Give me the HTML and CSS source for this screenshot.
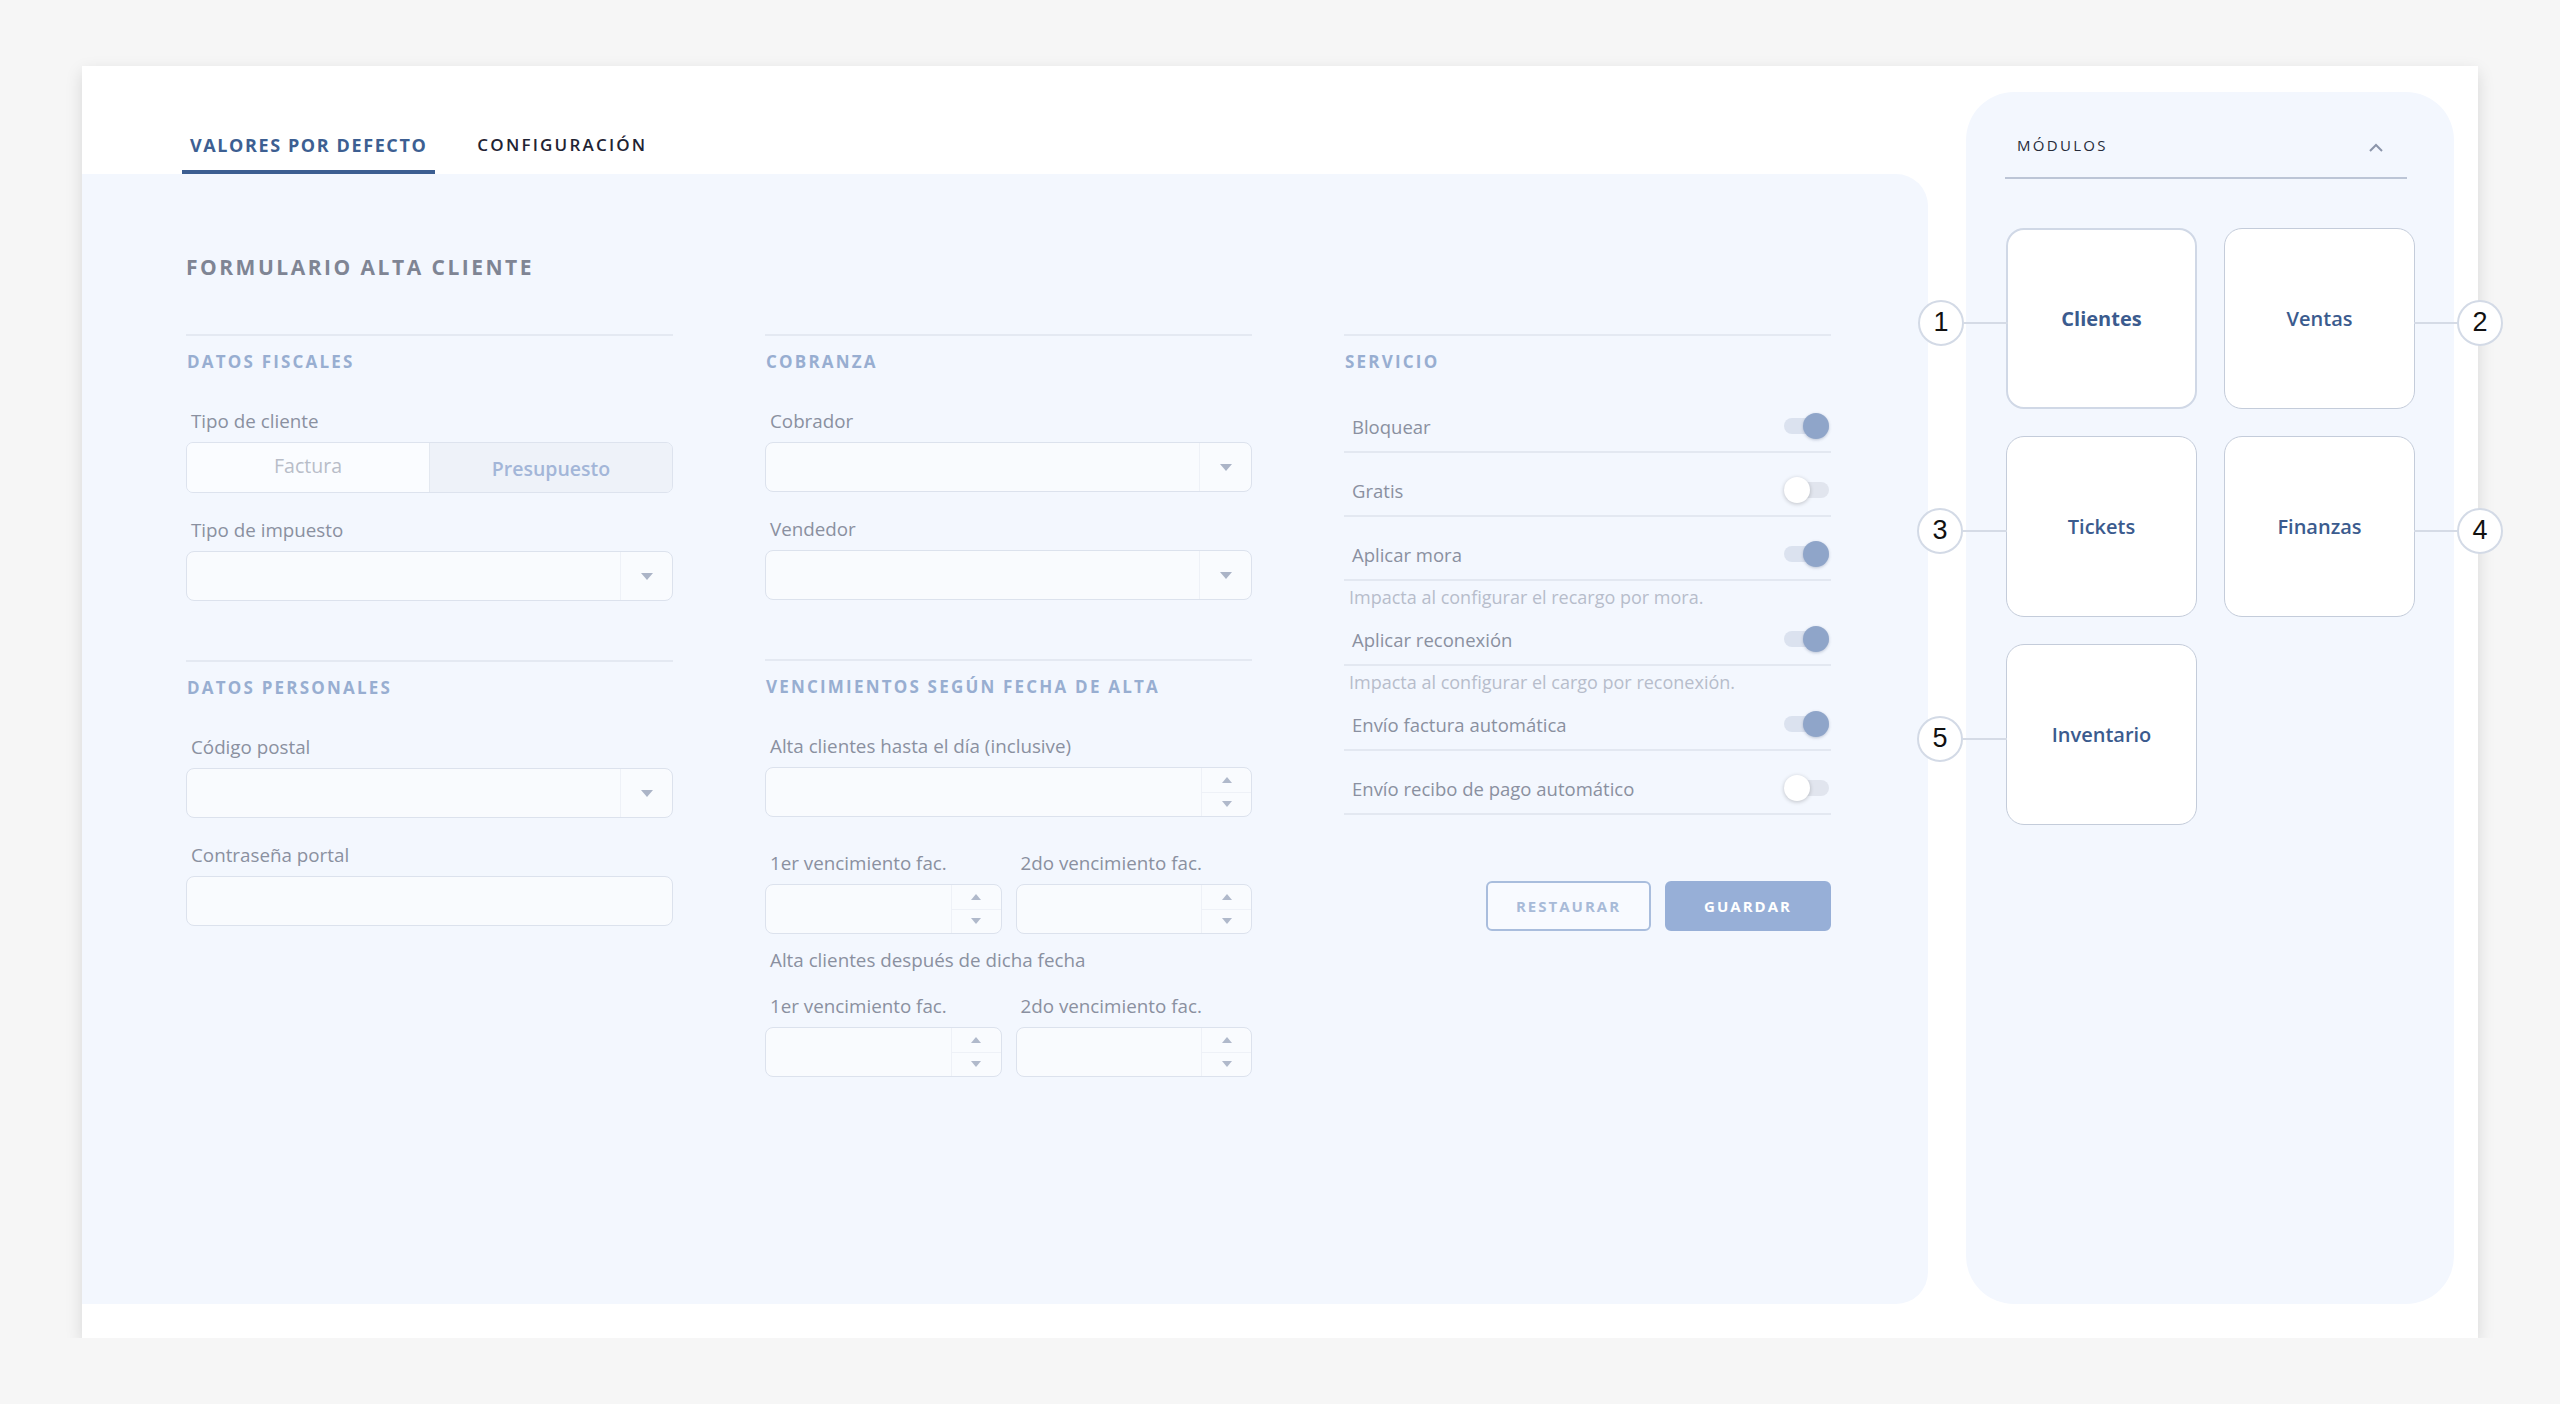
FILE: index.html
```html
<!DOCTYPE html>
<html lang="es">
<head>
    <meta charset="UTF-8">
    <meta name="viewport" content="width=device-width, initial-scale=1.0">
    <title>Valores por defecto</title>
    <link rel="stylesheet" href="styles.css">
</head>
<body>
    <div class="page">
        <div class="card">
            <div class="main">
                <nav class="tabs">
                    <a class="tab active" href="#valores">VALORES POR DEFECTO</a>
                    <a class="tab" href="#configuracion">CONFIGURACIÓN</a>
                </nav>

                <section class="form-panel">
                    <h1 class="form-title">FORMULARIO ALTA CLIENTE</h1>

                    <div class="form-grid">
                        <!-- columna 1 -->
                        <div class="column">
                            <div class="section">
                                <h2 class="section-title">DATOS FISCALES</h2>
                                <div class="field first">
                                    <label class="label">Tipo de cliente</label>
                                    <div class="segmented">
                                        <div class="seg seg-off">Factura</div>
                                        <div class="seg seg-on">Presupuesto</div>
                                    </div>
                                </div>
                                <div class="field">
                                    <label class="label">Tipo de impuesto</label>
                                    <div class="select"><span class="select-arrow"><i class="tri-down"></i></span></div>
                                </div>
                            </div>

                            <div class="section">
                                <h2 class="section-title">DATOS PERSONALES</h2>
                                <div class="field first">
                                    <label class="label">Código postal</label>
                                    <div class="select"><span class="select-arrow"><i class="tri-down"></i></span></div>
                                </div>
                                <div class="field">
                                    <label class="label">Contraseña portal</label>
                                    <div class="input"></div>
                                </div>
                            </div>
                        </div>

                        <!-- columna 2 -->
                        <div class="column">
                            <div class="section">
                                <h2 class="section-title">COBRANZA</h2>
                                <div class="field first">
                                    <label class="label">Cobrador</label>
                                    <div class="select"><span class="select-arrow"><i class="tri-down"></i></span></div>
                                </div>
                                <div class="field">
                                    <label class="label">Vendedor</label>
                                    <div class="select"><span class="select-arrow"><i class="tri-down"></i></span></div>
                                </div>
                            </div>

                            <div class="section">
                                <h2 class="section-title">VENCIMIENTOS SEGÚN FECHA DE ALTA</h2>
                                <div class="field first">
                                    <label class="label">Alta clientes hasta el día (inclusive)</label>
                                    <div class="number">
                                        <span class="spin"><span><i class="tri-up"></i></span><span><i class="tri-down small"></i></span></span>
                                    </div>
                                </div>
                                <div class="pair pair-top">
                                    <div class="field-inline">
                                        <label class="label">1er vencimiento fac.</label>
                                        <div class="number">
                                            <span class="spin"><span><i class="tri-up"></i></span><span><i class="tri-down small"></i></span></span>
                                        </div>
                                    </div>
                                    <div class="field-inline">
                                        <label class="label">2do vencimiento fac.</label>
                                        <div class="number">
                                            <span class="spin"><span><i class="tri-up"></i></span><span><i class="tri-down small"></i></span></span>
                                        </div>
                                    </div>
                                </div>
                                <div class="label note">Alta clientes después de dicha fecha</div>
                                <div class="pair pair-bottom">
                                    <div class="field-inline">
                                        <label class="label">1er vencimiento fac.</label>
                                        <div class="number">
                                            <span class="spin"><span><i class="tri-up"></i></span><span><i class="tri-down small"></i></span></span>
                                        </div>
                                    </div>
                                    <div class="field-inline">
                                        <label class="label">2do vencimiento fac.</label>
                                        <div class="number">
                                            <span class="spin"><span><i class="tri-up"></i></span><span><i class="tri-down small"></i></span></span>
                                        </div>
                                    </div>
                                </div>
                            </div>
                        </div>

                        <!-- columna 3 -->
                        <div class="column">
                            <div class="section">
                                <h2 class="section-title">SERVICIO</h2>
                                <div class="toggle-list">
                                    <div class="toggle-row"><span>Bloquear</span><span class="switch on"></span></div>
                                    <div class="toggle-row"><span>Gratis</span><span class="switch"></span></div>
                                    <div class="toggle-row"><span>Aplicar mora</span><span class="switch on"></span></div>
                                    <div class="hint">Impacta al configurar el recargo por mora.</div>
                                    <div class="toggle-row"><span>Aplicar reconexión</span><span class="switch on"></span></div>
                                    <div class="hint">Impacta al configurar el cargo por reconexión.</div>
                                    <div class="toggle-row"><span>Envío factura automática</span><span class="switch on"></span></div>
                                    <div class="toggle-row"><span>Envío recibo de pago automático</span><span class="switch"></span></div>
                                </div>
                                <div class="actions">
                                    <button class="btn btn-outline">RESTAURAR</button>
                                    <button class="btn btn-primary">GUARDAR</button>
                                </div>
                            </div>
                        </div>
                    </div>
                </section>
            </div>

            <aside class="modules">
                <div class="modules-head">
                    <span>MÓDULOS</span>
                    <svg class="chevron" width="16" height="10" viewBox="0 0 16 10"><polyline points="2,8 8,2 14,8" fill="none" stroke="#8b95aa" stroke-width="2"/></svg>
                </div>
                <div class="module-grid">
                    <div class="module active">Clientes
                        <div class="marker left"><span class="marker-num">1</span><span class="marker-line"></span></div>
                    </div>
                    <div class="module">Ventas
                        <div class="marker right"><span class="marker-num">2</span><span class="marker-line"></span></div>
                    </div>
                    <div class="module">Tickets
                        <div class="marker left"><span class="marker-num">3</span><span class="marker-line"></span></div>
                    </div>
                    <div class="module">Finanzas
                        <div class="marker right"><span class="marker-num">4</span><span class="marker-line"></span></div>
                    </div>
                    <div class="module">Inventario
                        <div class="marker left"><span class="marker-num">5</span><span class="marker-line"></span></div>
                    </div>
                </div>
            </aside>
        </div>
    </div>
</body>
</html>
```

FILE: styles.css
```css
* {
    margin: 0;
    padding: 0;
    box-sizing: border-box;
}

body {
    background-color: #f6f6f6;
    font-family: "Open Sans", "Noto Sans", sans-serif;
    color: #8a90a0;
    overflow: hidden;
}

.page {
    padding: 66px 0 0 82px;
}

.card {
    width: 2396px;
    height: 1272px;
    background: #fff;
    box-shadow: 0 6px 16px rgba(0, 0, 0, 0.13);
    display: flex;
    padding: 0 24px 34px 0;
}

.main {
    flex: 0 0 1846px;
    display: flex;
    flex-direction: column;
}

/* tabs */

.tabs {
    height: 108px;
    display: flex;
    align-items: flex-end;
    gap: 34px;
    padding-left: 100px;
}

.tab {
    padding: 0 8px 13px;
    border-bottom: 4px solid transparent;
    font-size: 17px;
    line-height: 24px;
    letter-spacing: 2.2px;
    font-weight: 600;
    color: #1f2333;
    text-decoration: none;
}

.tab.active {
    font-size: 18px;
    color: #3d5f92;
    font-weight: 700;
    letter-spacing: 1.6px;
    border-bottom-color: #3c5e91;
}

/* form panel */

.form-panel {
    flex: 1;
    background: #f3f7fe;
    border-top-right-radius: 32px;
    border-bottom-right-radius: 32px;
    padding: 78px 0 0 104px;
}

.form-title {
    font-size: 21px;
    line-height: 30px;
    font-weight: 700;
    letter-spacing: 2.5px;
    color: #7f8594;
}

.form-grid {
    display: grid;
    grid-template-columns: repeat(3, 487px);
    column-gap: 92px;
    margin-top: 52px;
}

.section {
    border-top: 2px solid #e4e9f2;
    padding-top: 14px;
}

.section + .section {
    margin-top: 59px;
}

.section-title {
    font-size: 17px;
    line-height: 24px;
    font-weight: 700;
    letter-spacing: 2.2px;
    color: #98aed1;
    padding-left: 1px;
}

.label {
    display: block;
    font-size: 18.8px;
    line-height: 24px;
    color: #8a90a0;
    padding-left: 5px;
    margin-bottom: 9px;
}

.field {
    margin-top: 25px;
}

.field.first {
    margin-top: 35px;
}

.segmented {
    display: flex;
    height: 51px;
    border: 1px solid #dde3ee;
    border-radius: 7px;
    overflow: hidden;
}

.seg {
    flex: 1;
    display: flex;
    align-items: center;
    justify-content: center;
    font-size: 19.5px;
}

.seg-off {
    background: #fafcff;
    color: #b8bdc8;
    padding-bottom: 4px;
}

.seg-on {
    background: #eef2f9;
    color: #a3b6d8;
    font-weight: 600;
    border-left: 1px solid #e3e8f0;
    padding-top: 2px;
}

.select,
.number,
.input {
    height: 50px;
    border: 1px solid #dce2ed;
    border-radius: 8px;
    background: #f9fbfe;
    display: flex;
    justify-content: flex-end;
}

.select-arrow {
    width: 52px;
    border-left: 1px solid #eef1f7;
    display: flex;
    align-items: center;
    justify-content: center;
}

.tri-down {
    width: 0;
    height: 0;
    border-left: 6px solid transparent;
    border-right: 6px solid transparent;
    border-top: 7px solid #abb4c7;
}

.tri-down.small {
    border-left-width: 5px;
    border-right-width: 5px;
    border-top-width: 6px;
    border-top-color: #b0b9cb;
}

.tri-up {
    width: 0;
    height: 0;
    border-left: 5px solid transparent;
    border-right: 5px solid transparent;
    border-bottom: 6px solid #b0b9cb;
}

.spin {
    width: 50px;
    border-left: 1px solid #eef1f7;
    display: flex;
    flex-direction: column;
}

.spin > span {
    flex: 1;
    display: flex;
    align-items: center;
    justify-content: center;
}

.spin > span:first-child {
    border-bottom: 1px solid #eef1f7;
}

.pair {
    display: grid;
    grid-template-columns: 1fr 1fr;
    column-gap: 14px;
}

.pair-top {
    margin-top: 34px;
}

.pair-bottom {
    margin-top: 22px;
}

.note {
    margin-top: 14px;
    margin-bottom: 0;
}

/* servicio */

.toggle-list {
    display: flex;
    flex-direction: column;
    margin-top: 27px;
}

.toggle-row {
    height: 52px;
    display: flex;
    align-items: center;
    justify-content: space-between;
    border-bottom: 2px solid #e3e8f1;
    padding: 0 2px 0 8px;
    font-size: 18.5px;
    color: #8a90a0;
}

.toggle-row + .toggle-row {
    margin-top: 12px;
}

.hint {
    font-size: 18px;
    line-height: 22px;
    color: #b7bdcb;
    padding-left: 5px;
    margin-top: 5px;
    margin-bottom: 6px;
}

.switch {
    position: relative;
    width: 45px;
    height: 16px;
    border-radius: 8px;
    background: #e1e5ee;
}

.switch::after {
    content: "";
    position: absolute;
    top: -5px;
    left: 0;
    width: 26px;
    height: 26px;
    border-radius: 50%;
    background: #fff;
    box-shadow: 0 1px 4px rgba(0, 0, 0, 0.22);
}

.switch.on {
    background: #dbe2ef;
}

.switch.on::after {
    left: auto;
    right: 0;
    background: #8fa5c9;
    box-shadow: 0 1px 3px rgba(60, 80, 120, 0.3);
}

.actions {
    display: flex;
    justify-content: flex-end;
    gap: 14px;
    margin-top: 66px;
}

.btn {
    height: 50px;
    width: 165px;
    border-radius: 6px;
    border: 2px solid;
    font-family: "Open Sans", sans-serif;
    font-size: 15px;
    font-weight: 700;
    letter-spacing: 2px;
    cursor: pointer;
}

.btn-outline {
    background: #f8faff;
    border-color: #a9bddd;
    color: #a8bad8;
}

.btn-primary {
    width: 166px;
    background: #97afd7;
    border-color: #97afd7;
    color: #fff;
}

/* modulos */

.modules {
    width: 488px;
    margin: 26px 0 0 38px;
    background: #f3f7fe;
    border-radius: 48px;
    padding: 41px 38px 0 40px;
}

.modules-head {
    display: flex;
    align-items: center;
    justify-content: space-between;
    margin-right: 9px;
    margin-left: -1px;
    padding: 0 23px 20px 12px;
    border-bottom: 2px solid #bcc5d6;
    font-size: 15px;
    line-height: 24px;
    font-weight: 500;
    letter-spacing: 2.3px;
    color: #262b3a;
}

.chevron {
    margin-top: 6px;
}

.module-grid {
    display: grid;
    grid-template-columns: 191px 191px;
    grid-auto-rows: 181px;
    gap: 27px;
    margin-top: 49px;
}

.module {
    position: relative;
    background: #fff;
    border: 1px solid #c4ccda;
    border-radius: 18px;
    display: flex;
    align-items: center;
    justify-content: center;
    font-size: 20px;
    font-weight: 600;
    color: #3b5b8e;
}

.module.active {
    border: 2px solid #d0d8e6;
    font-weight: 700;
}

.marker {
    position: absolute;
    top: calc(50% + 4px);
    transform: translateY(-50%);
    display: flex;
    align-items: center;
}

.marker.left {
    right: 100%;
}

.marker.right {
    left: 100%;
    flex-direction: row-reverse;
}

.marker-line {
    width: 44px;
    height: 2px;
    background: #d5dbe6;
}

.marker.right .marker-line {
    width: 43px;
}

.marker-num {
    width: 46px;
    height: 46px;
    border-radius: 50%;
    border: 2px solid #d3dae6;
    background: #fff;
    display: flex;
    align-items: center;
    justify-content: center;
    font-family: "Liberation Sans", Arial, sans-serif;
    font-size: 27px;
    font-weight: 400;
    color: #111;
}
```
